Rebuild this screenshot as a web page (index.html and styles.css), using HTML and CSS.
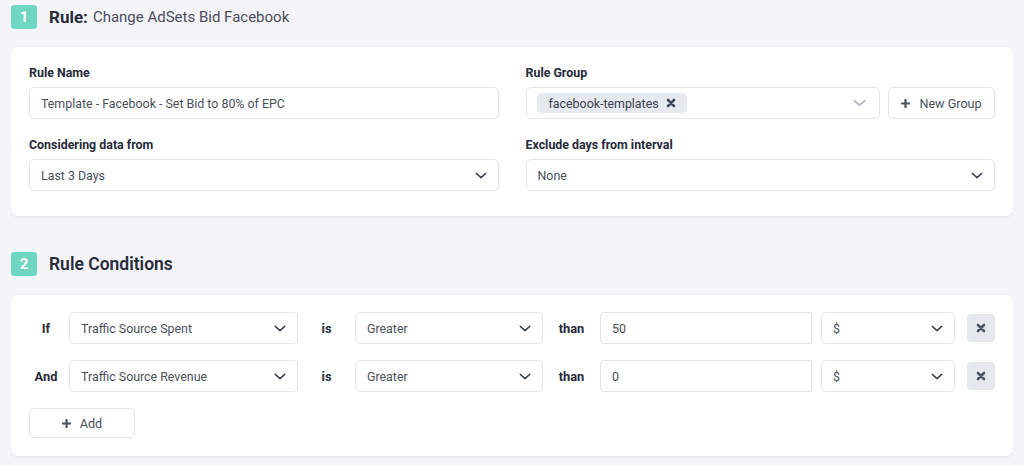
FILE: index.html
```html
<!DOCTYPE html>
<html>
<head>
<meta charset="utf-8">
<link rel="stylesheet" href="styles.css">
</head>
<body>
<div class="page">
  <div class="step-head">
    <span class="badge">1</span>
    <span class="step-title">Rule:</span>
    <span class="step-sub">Change AdSets Bid Facebook</span>
  </div>
  <div class="card card-rule">
    <div class="grid2">
      <div class="field">
        <label class="lbl">Rule Name</label>
        <div class="control"><span class="val">Template - Facebook - Set Bid to 80% of EPC</span></div>
      </div>
      <div class="field">
        <label class="lbl">Rule Group</label>
        <div class="group-row">
          <div class="control multi">
            <span class="tag">facebook-templates
              <svg class="tag-x" viewBox="0 0 10 10" width="10" height="10"><path d="M2 2 L8 8 M8 2 L2 8" stroke="#3f4a5e" stroke-width="2.6" stroke-linecap="round"/></svg>
            </span>
            <svg class="chev light" viewBox="0 0 14 8" width="13" height="8"><path d="M1.5 1.5 L7 6.5 L12.5 1.5" fill="none" stroke="#b9bdc5" stroke-width="2.2" stroke-linecap="round" stroke-linejoin="round"/></svg>
          </div>
          <button class="btn new-group"><svg viewBox="0 0 10 10" width="9" height="9"><path d="M5 1 V9 M1 5 H9" stroke="#4a5060" stroke-width="2.4" stroke-linecap="round"/></svg>New Group</button>
        </div>
      </div>
      <div class="field">
        <label class="lbl">Considering data from</label>
        <div class="control select"><span class="val">Last 3 Days</span>
          <svg class="chev" viewBox="0 0 14 8" width="12" height="7"><path d="M1.5 1.5 L7 6.5 L12.5 1.5" fill="none" stroke="#3c4150" stroke-width="1.7" stroke-linecap="round" stroke-linejoin="round"/></svg>
        </div>
      </div>
      <div class="field">
        <label class="lbl">Exclude days from interval</label>
        <div class="control select"><span class="val">None</span>
          <svg class="chev" viewBox="0 0 14 8" width="12" height="7"><path d="M1.5 1.5 L7 6.5 L12.5 1.5" fill="none" stroke="#3c4150" stroke-width="1.7" stroke-linecap="round" stroke-linejoin="round"/></svg>
        </div>
      </div>
    </div>
  </div>

  <div class="step-head second">
    <span class="badge">2</span>
    <span class="step-title big">Rule Conditions</span>
  </div>
  <div class="card card-cond">
    <div class="cond-row">
      <span class="cw first">If</span>
      <div class="control select metric"><span class="val">Traffic Source Spent</span>
        <svg class="chev" viewBox="0 0 14 8" width="12" height="7"><path d="M1.5 1.5 L7 6.5 L12.5 1.5" fill="none" stroke="#3c4150" stroke-width="1.7" stroke-linecap="round" stroke-linejoin="round"/></svg>
      </div>
      <span class="cw mid">is</span>
      <div class="control select op"><span class="val">Greater</span>
        <svg class="chev" viewBox="0 0 14 8" width="12" height="7"><path d="M1.5 1.5 L7 6.5 L12.5 1.5" fill="none" stroke="#3c4150" stroke-width="1.7" stroke-linecap="round" stroke-linejoin="round"/></svg>
      </div>
      <span class="cw mid">than</span>
      <div class="control num"><span class="val">50</span></div>
      <div class="control select unit"><span class="val">$</span>
        <svg class="chev" viewBox="0 0 14 8" width="12" height="7"><path d="M1.5 1.5 L7 6.5 L12.5 1.5" fill="none" stroke="#3c4150" stroke-width="1.7" stroke-linecap="round" stroke-linejoin="round"/></svg>
      </div>
      <button class="del"><svg viewBox="0 0 10 10" width="10" height="10"><path d="M2 2 L8 8 M8 2 L2 8" stroke="#4a5468" stroke-width="2.6" stroke-linecap="round"/></svg></button>
    </div>
    <div class="cond-row">
      <span class="cw first">And</span>
      <div class="control select metric"><span class="val">Traffic Source Revenue</span>
        <svg class="chev" viewBox="0 0 14 8" width="12" height="7"><path d="M1.5 1.5 L7 6.5 L12.5 1.5" fill="none" stroke="#3c4150" stroke-width="1.7" stroke-linecap="round" stroke-linejoin="round"/></svg>
      </div>
      <span class="cw mid">is</span>
      <div class="control select op"><span class="val">Greater</span>
        <svg class="chev" viewBox="0 0 14 8" width="12" height="7"><path d="M1.5 1.5 L7 6.5 L12.5 1.5" fill="none" stroke="#3c4150" stroke-width="1.7" stroke-linecap="round" stroke-linejoin="round"/></svg>
      </div>
      <span class="cw mid">than</span>
      <div class="control num"><span class="val">0</span></div>
      <div class="control select unit"><span class="val">$</span>
        <svg class="chev" viewBox="0 0 14 8" width="12" height="7"><path d="M1.5 1.5 L7 6.5 L12.5 1.5" fill="none" stroke="#3c4150" stroke-width="1.7" stroke-linecap="round" stroke-linejoin="round"/></svg>
      </div>
      <button class="del"><svg viewBox="0 0 10 10" width="10" height="10"><path d="M2 2 L8 8 M8 2 L2 8" stroke="#4a5468" stroke-width="2.6" stroke-linecap="round"/></svg></button>
    </div>
    <button class="btn add"><svg viewBox="0 0 10 10" width="9" height="9"><path d="M5 1 V9 M1 5 H9" stroke="#4a5060" stroke-width="2.4" stroke-linecap="round"/></svg>Add</button>
  </div>
</div>
</body>
</html>
```

FILE: styles.css
```css
* { box-sizing: border-box; }
html, body { margin: 0; padding: 0; }
body {
  background: #f4f4f9;
  font-family: Roboto, "Liberation Sans", sans-serif;
  color: #2a2e3d;
  width: 1024px;
  height: 465px;
  overflow: hidden;
}
.page { padding: 5px 11px 0; }

.step-head {
  display: flex;
  align-items: center;
  height: 24px;
  margin-bottom: 18px;
}
.step-head.second { margin-top: 36px; margin-bottom: 19px; }
.badge {
  width: 26px;
  height: 24px;
  border-radius: 3px;
  background: #6fd6c1;
  color: #fff;
  font-weight: 700;
  font-size: 15px;
  display: flex;
  align-items: center;
  justify-content: center;
  margin-right: 12px;
}
.step-title {
  font-size: 17px;
  font-weight: 700;
  color: #262a3a;
  margin-right: 5px;
}
.step-title.big { font-size: 17.5px; font-weight: 600; }
.step-sub {
  font-size: 15px;
  color: #4a4e5c;
}

.card {
  background: #fff;
  border-radius: 8px;
  box-shadow: 0 1px 3px rgba(40, 44, 70, 0.08);
}
.card-rule { padding: 18px 18px 25px; }
.grid2 {
  display: grid;
  grid-template-columns: 1fr 1fr;
  column-gap: 27px;
  row-gap: 18px;
}
.field { display: flex; flex-direction: column; }
.lbl {
  font-size: 12.4px;
  font-weight: 700;
  line-height: 16px;
  height: 16px;
  margin-bottom: 6px;
  color: #262a3a;
}
.control {
  height: 32px;
  border: 1px solid #e3e5ea;
  border-radius: 5px;
  background: #fff;
  display: flex;
  align-items: center;
  padding: 0 11px;
  font-size: 12.4px;
  color: #4a4f5c;
}
.control .val { flex: 1; white-space: nowrap; overflow: hidden; }
.control .chev { flex: none; }
.select { padding-right: 11px; }

.group-row { display: flex; gap: 8px; }
.multi { flex: 1; padding-left: 10px; padding-right: 13px; justify-content: space-between; }
.tag {
  display: inline-flex;
  align-items: center;
  height: 20px;
  padding: 0 11px 0 12px;
  background: #e6e9ef;
  border-radius: 4px;
  font-size: 12.4px;
  color: #3b4050;
}
.tag-x { margin-left: 7px; }
.btn {
  font-family: inherit;
  background: #fff;
  border: 1px solid #e3e5ea;
  border-radius: 5px;
  color: #4a4f5c;
  font-size: 12.6px;
  display: flex;
  align-items: center;
  justify-content: center;
  gap: 9px;
  padding: 0;
  cursor: pointer;
}
.new-group { width: 107px; height: 32px; }

.card-cond { padding: 17px 18px 18px; }
.cond-row {
  display: flex;
  align-items: center;
  height: 32px;
  margin-bottom: 16px;
}
.cw {
  font-size: 12.8px;
  font-weight: 700;
  color: #262a3a;
  text-align: center;
  flex: none;
}
.cw.first { width: 34px; margin-right: 6px; }
.cw.mid { width: 57px; }
.metric { width: 229px; }
.op { width: 188px; }
.num { width: 212px; border-radius: 4px 0 0 4px; }
.unit { width: 134px; margin-left: 9px; }
.del {
  width: 28px;
  height: 28px;
  margin-left: 12px;
  border: none;
  border-radius: 4px;
  background: #e5e9ee;
  display: flex;
  align-items: center;
  justify-content: center;
  padding: 0;
}
.add { width: 106px; height: 30px; }
```
